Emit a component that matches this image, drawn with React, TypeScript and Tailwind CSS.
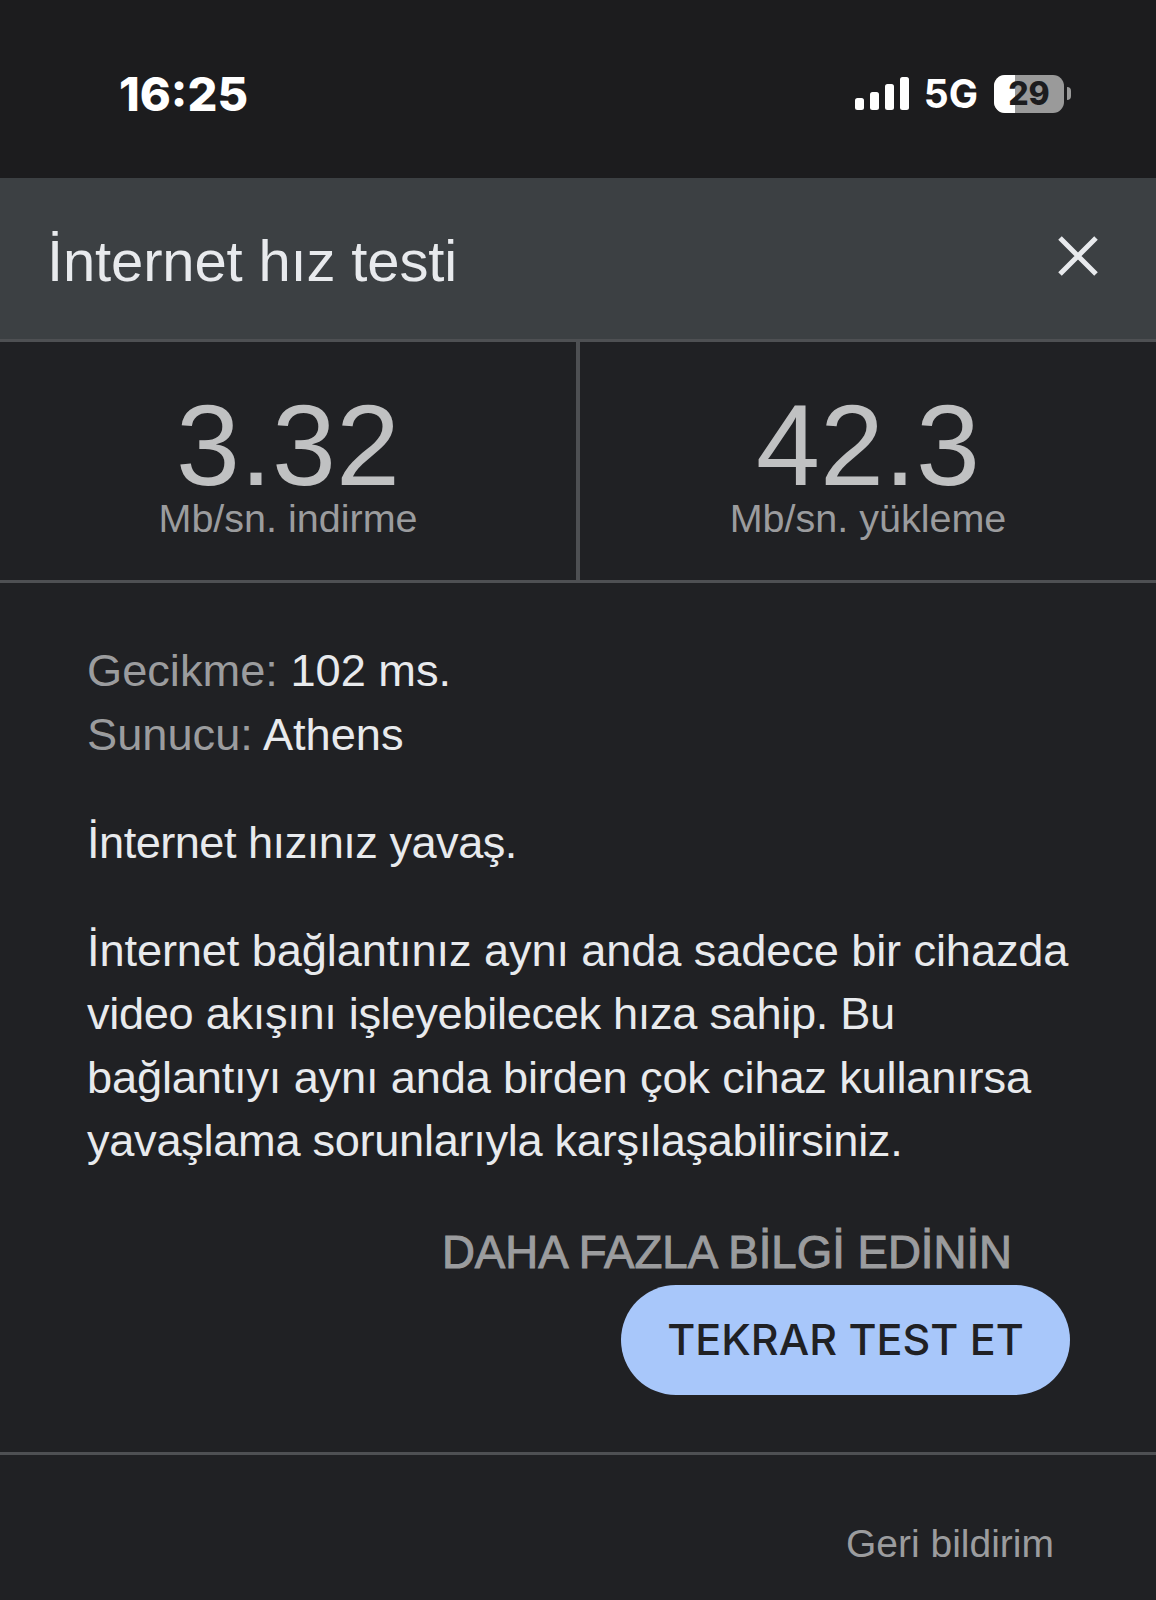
export default function App() {
  return (
    <div className="w-[1156px] h-[1600px] overflow-hidden bg-[#202124] font-['Liberation_Sans',Arial,sans-serif] flex flex-col">
      <div className="h-[178px] shrink-0 bg-[#1c1c1e] flex items-center justify-between pl-[119px] pr-[85px] pt-[9px] font-['Inter',sans-serif]">
        <span className="text-[47px] leading-none font-extrabold text-white">16:25</span>
        <div className="flex items-center">
          <svg width="54" height="33" viewBox="0 0 54 33" fill="#fff">
            <rect x="0" y="21" width="9" height="12" rx="2.5" />
            <rect x="15" y="15" width="9" height="18" rx="2.5" />
            <rect x="30" y="7" width="9" height="26" rx="2.5" />
            <rect x="45" y="0" width="9" height="33" rx="2.5" />
          </svg>
          <span className="ml-[15px] text-[39px] leading-none font-bold text-white">5G</span>
          <div className="ml-[16px] relative w-[70px] h-[38px] rounded-[11px] overflow-hidden bg-[#9a9a9a] flex items-center justify-center">
            <div className="absolute left-0 top-0 bottom-0 w-[21px] bg-white" />
            <span className="relative text-[32px] leading-none font-extrabold text-[#1c1c1e]">29</span>
          </div>
          <div className="ml-[3px] w-[4px] h-[13px] rounded-r-full bg-[#9a9a9a]" />
        </div>
      </div>

      <div className="h-[164px] shrink-0 bg-[#3c4043] border-b-[3px] border-[#4e5053] flex items-center justify-between pl-[47px] pr-[58px]">
        <span className="text-[58px] leading-none tracking-[-0.15px] text-[#e8eaed] mt-[5px]">İnternet hız testi</span>
        <svg width="40" height="40" viewBox="0 0 40 40" className="mb-[6px]" stroke="#e8eaed" strokeWidth="5" fill="none">
          <path d="M2 2 L38 38 M38 2 L2 38" />
        </svg>
      </div>

      <div className="h-[241px] shrink-0 flex border-b-[3px] border-[#4e5053]">
        <div className="w-[580px] border-r-[4px] border-[#4e5053] flex flex-col items-center pt-[53px]">
          <span className="text-[115px] leading-[100px] text-[#c0c1c2]">3.32</span>
          <span className="text-[39.5px] leading-[44px] mt-[1px] text-[#9b9c9e]">Mb/sn. indirme</span>
        </div>
        <div className="flex-1 flex flex-col items-center pt-[53px]">
          <span className="text-[115px] leading-[100px] text-[#c0c1c2]">42.3</span>
          <span className="text-[39.5px] leading-[44px] mt-[1px] text-[#9b9c9e]">Mb/sn. yükleme</span>
        </div>
      </div>

      <div className="pl-[87px] pr-[60px] pt-[56px] text-[45.2px] leading-[63.5px] text-[#e8eaed]">
        <p><span className="text-[#9b9c9e]">Gecikme:</span> 102 ms.</p>
        <p><span className="text-[#9b9c9e]">Sunucu:</span> Athens</p>
        <p className="mt-[45px] tracking-[-0.53px]">İnternet hızınız yavaş.</p>
        <p className="mt-[44px]">
          <span className="block tracking-[-0.12px]">İnternet bağlantınız aynı anda sadece bir cihazda</span>
          <span className="block tracking-[-0.32px]">video akışını işleyebilecek hıza sahip. Bu</span>
          <span className="block tracking-[-0.17px]">bağlantıyı aynı anda birden çok cihaz kullanırsa</span>
          <span className="block tracking-[-0.31px]">yavaşlama sorunlarıyla karşılaşabilirsiniz.</span>
        </p>
      </div>

      <div className="flex flex-col items-end pr-[86px] mt-[54px]">
        <span className="mr-[58px] text-[45.6px] leading-[52px] text-[#9b9c9e] [-webkit-text-stroke:1px_#9b9c9e]">DAHA FAZLA BİLGİ EDİNİN</span>
        <div className="mt-[6px] w-[449px] h-[110px] rounded-full bg-[#a8c7fa] flex items-center justify-center">
          <span className="text-[43px] leading-none font-medium text-[#202124] font-['Inter',sans-serif]">TEKRAR TEST ET</span>
        </div>
      </div>

      <div className="mt-[57px] border-t-[3px] border-[#4e5053] flex justify-end pr-[102px] pt-[67px]">
        <span className="text-[39px] leading-[44px] text-[#9b9c9e]">Geri bildirim</span>
      </div>
    </div>
  );
}
